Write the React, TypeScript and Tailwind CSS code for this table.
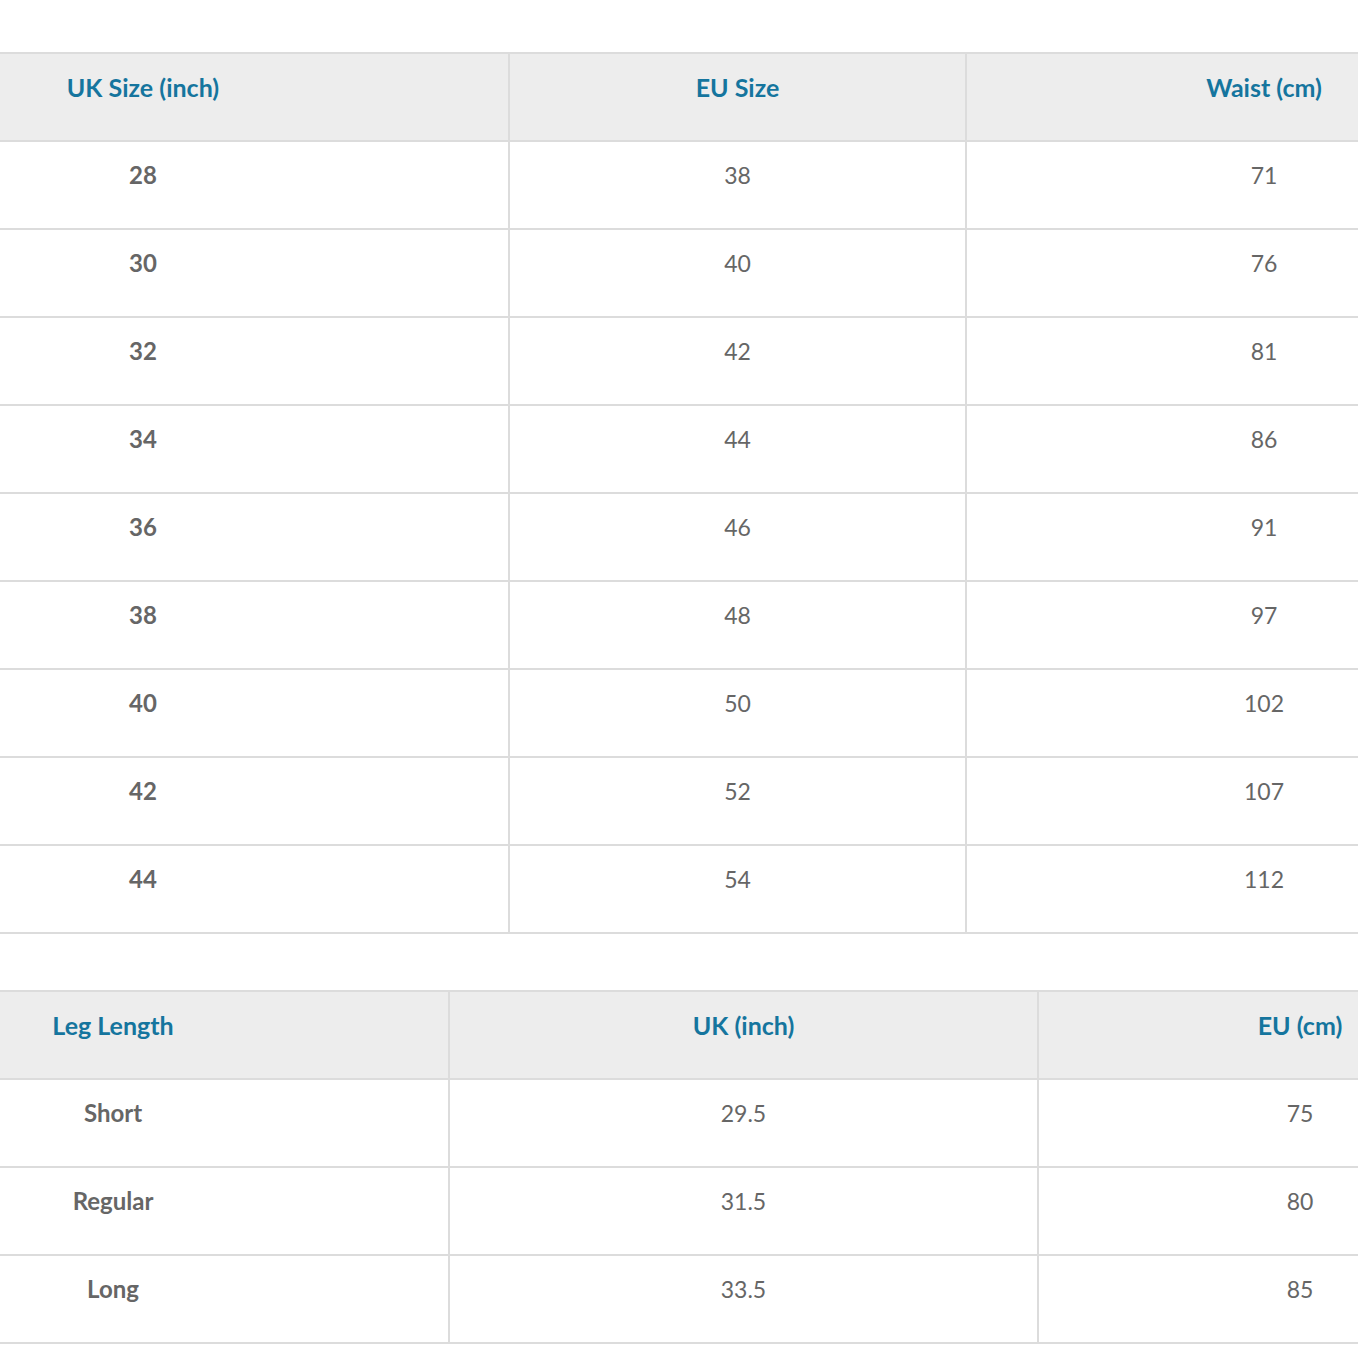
import React from "react";

type Table = {
  cols: string[];
  template: string;
  rows: string[][];
};

const waist: Table = {
  cols: ["UK Size (inch)", "EU Size", "Waist (cm)"],
  template: "grid-cols-[732px_457px_594px]",
  rows: [
    ["28", "38", "71"],
    ["30", "40", "76"],
    ["32", "42", "81"],
    ["34", "44", "86"],
    ["36", "46", "91"],
    ["38", "48", "97"],
    ["40", "50", "102"],
    ["42", "52", "107"],
    ["44", "54", "112"],
  ],
};

const leg: Table = {
  cols: ["Leg Length", "UK (inch)", "EU (cm)"],
  template: "grid-cols-[672px_589px_522px]",
  rows: [
    ["Short", "29.5", "75"],
    ["Regular", "31.5", "80"],
    ["Long", "33.5", "85"],
  ],
};

function SizeTable({ table }: { table: Table }) {
  return (
    <div className="w-[1783px] -ml-[222px] border-t-2 border-[#dcdcdc]">
      <div className={`grid ${table.template} bg-[#ededed] border-b-2 border-[#dcdcdc]`}>
        {table.cols.map((c, i) => (
          <div
            key={c}
            className={`h-[86px] pt-[18px] text-center text-[25px] leading-[30px] font-bold text-[#15759e] ${
              i < 2 ? "border-r-2 border-[#dcdcdc]" : ""
            }`}
          >
            {c}
          </div>
        ))}
      </div>
      {table.rows.map((row) => (
        <div key={row[0]} className={`grid ${table.template} border-b-2 border-[#dcdcdc]`}>
          {row.map((cell, i) => (
            <div
              key={i}
              className={`h-[86px] pt-[18px] text-center leading-[30px] text-[#666666] ${
                i === 0 ? "font-bold text-[24px]" : "text-[23px]"
              } ${i < 2 ? "border-r-2 border-[#dcdcdc]" : ""}`}
            >
              {cell}
            </div>
          ))}
        </div>
      ))}
    </div>
  );
}

export default function App() {
  return (
    <div
      className="w-[1358px] min-h-[1358px] overflow-hidden bg-white pt-[52px]"
      style={{ fontFamily: "Lato, 'Liberation Sans', sans-serif" }}
    >
      <SizeTable table={waist} />
      <div className="h-[56px]" />
      <SizeTable table={leg} />
    </div>
  );
}
